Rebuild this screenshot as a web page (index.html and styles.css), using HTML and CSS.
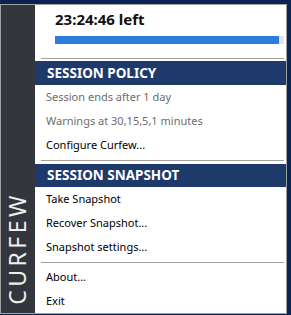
FILE: index.html
```html
<!DOCTYPE html>
<html>
<head>
<meta charset="utf-8">
<link rel="stylesheet" href="styles.css">
</head>
<body>
<div class="menu">
  <div class="sidebar"><span class="brand">CURFEW</span></div>
  <div class="content">
    <div class="timer">
      <div class="time">23:24:46 left</div>
      <div class="track"><div class="bar" style="width: 97.8%"></div></div>
    </div>
    <div class="sep sep-first"></div>
    <div class="header">SESSION POLICY</div>
    <div class="item disabled">Session ends after 1 day</div>
    <div class="item disabled">Warnings at 30,15,5,1 minutes</div>
    <div class="item">Configure Curfew...</div>
    <div class="sep"></div>
    <div class="header header-2">SESSION SNAPSHOT</div>
    <div class="item">Take Snapshot</div>
    <div class="item">Recover Snapshot...</div>
    <div class="item">Snapshot settings...</div>
    <div class="sep sep-last"></div>
    <div class="item">About...</div>
    <div class="item">Exit</div>
  </div>
</div>
</body>
</html>
```
FILE: styles.css
```css
html, body {
  margin: 0;
  padding: 0;
}
body {
  background: #0b2352;
  width: 291px;
  height: 315px;
  overflow: hidden;
  font-family: "Noto Sans", "Liberation Sans", sans-serif;
}
.menu {
  margin-top: 4px;
  width: 285px;
  height: 308px;
  border: 1px solid #a0a0a0;
  display: flex;
  background: #ffffff;
}
.sidebar {
  width: 34px;
  background: #33363d;
  display: flex;
  flex-direction: column;
  justify-content: flex-end;
  align-items: center;
  padding-bottom: 8px;
  box-sizing: border-box;
}
.brand {
  writing-mode: vertical-rl;
  transform: rotate(180deg);
  color: #eceef0;
  font-size: 23px;
  letter-spacing: 3.5px;
  line-height: 1;
  margin-right: 2px;
}
.content {
  flex: 1;
  display: flex;
  flex-direction: column;
}
.timer {
  height: 53px;
  margin-left: 7px;
  padding: 4px 2px 0 13px;
  box-sizing: border-box;
}
.time {
  font-weight: bold;
  font-size: 15px;
  color: #111;
  line-height: 20px;
  height: 27px;
}
.track {
  height: 8px;
  background: #e4e4e4;
}
.bar {
  height: 100%;
  background: #2d7ddd;
}
.sep {
  height: 1px;
  background: #a0a0a0;
  margin: 3px 2px 3px 6px;
}
.sep-first {
  margin-top: 0;
  margin-bottom: 2px;
}
.sep-last {
  margin-bottom: 2px;
}
.header {
  height: 24px;
  line-height: 24px;
  background: #1d3a6b;
  color: #ffffff;
  font-weight: bold;
  font-size: 13.5px;
  padding-left: 12px;
}
.header-2 {
  height: 23px;
  line-height: 23px;
}
.item {
  height: 24px;
  line-height: 24px;
  font-size: 11px;
  color: #000;
  padding-left: 11px;
}
.item.disabled {
  color: #6d6d6d;
}
```
